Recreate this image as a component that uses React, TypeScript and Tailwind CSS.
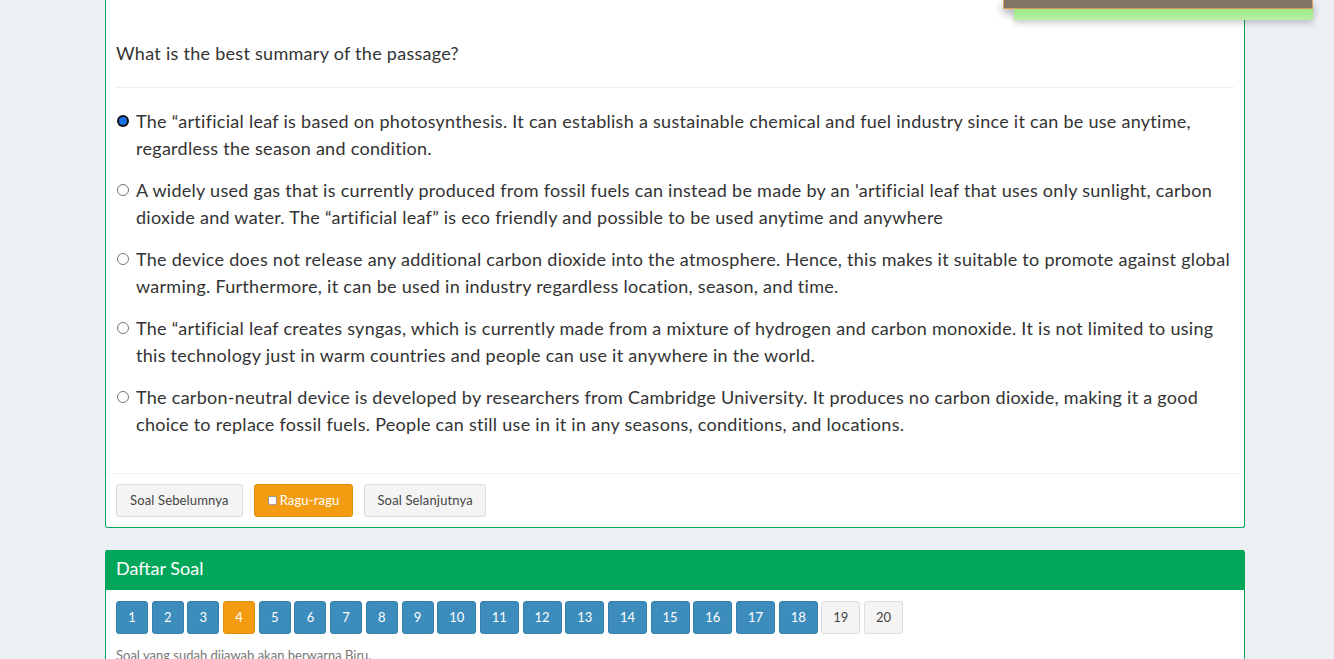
import React from "react";

const options = [
  "The \u201cartificial leaf is based on photosynthesis. It can establish a sustainable chemical and fuel industry since it can be use anytime, regardless the season and condition.",
  "A widely used gas that is currently produced from fossil fuels can instead be made by an 'artificial leaf that uses only sunlight, carbon dioxide and water. The \u201cartificial leaf\u201d is eco friendly and possible to be used anytime and anywhere",
  "The device does not release any additional carbon dioxide into the atmosphere. Hence, this makes it suitable to promote against global warming. Furthermore, it can be used in industry regardless location, season, and time.",
  "The \u201cartificial leaf creates syngas, which is currently made from a mixture of hydrogen and carbon monoxide. It is not limited to using this technology just in warm countries and people can use it anywhere in the world.",
  "The carbon-neutral device is developed by researchers from Cambridge University. It produces no carbon dioxide, making it a good choice to replace fossil fuels. People can still use in it in any seasons, conditions, and locations.",
];

function Radio({ checked }: { checked: boolean }) {
  if (checked) {
    return (
      <span className="mt-[7px] flex h-[12px] w-[12px] shrink-0 items-center justify-center rounded-full bg-[#111]">
        <span className="h-[8px] w-[8px] rounded-full bg-[#1a73e8]" />
      </span>
    );
  }
  return <span className="mt-[7px] h-[12px] w-[12px] shrink-0 rounded-full border border-[#767676] bg-white" />;
}

export default function App() {
  const nums = Array.from({ length: 20 }, (_, i) => i + 1);
  return (
    <div
      className="relative h-[659px] w-full overflow-hidden bg-[#ecf0f5] text-[#333]"
      style={{ fontFamily: "Lato, 'Liberation Sans', sans-serif" }}
    >
      {/* floating widget top right */}
      <div className="absolute left-[1003px] top-0 w-[310px]">
        <div className="h-[9px] border-b border-x border-[#d9a35a] bg-[#7f7466] shadow-[0_4px_8px_rgba(0,0,0,0.35)]" />
        <div className="ml-[11px] h-[11px] bg-gradient-to-b from-[#9fe883] to-[#b8f0a4] shadow-[0_3px_6px_rgba(0,0,0,0.2)]" />
      </div>

      <div className="ml-[105px] w-[1140px]">
        {/* question box */}
        <div className="rounded-b-[3px] border-x border-b border-[#00a65a] bg-white">
          <div className="px-[10px] pt-[40px] tracking-[0.28px]">
            <p className="text-[18px] leading-[27px]">What is the best summary of the passage?</p>
            <div className="mt-[20px] mb-[20px] border-t border-[#eee]" />
            <div className="flex flex-col gap-[15px]">
              {options.map((o, i) => (
                <div key={i} className="flex gap-[7px] pl-[1px]">
                  <Radio checked={i === 0} />
                  <span className="text-[18px] leading-[27px]">{o}</span>
                </div>
              ))}
            </div>
          </div>
          <div className="mt-[35px] flex gap-[11px] border-t border-[#f4f4f4] p-[10px] tracking-[0.15px]">
            <button className="h-[33px] rounded-[3px] border border-[#ddd] bg-[#f4f4f4] px-[13px] text-[13px] text-[#444]">
              Soal Sebelumnya
            </button>
            <button className="flex h-[33px] items-center gap-[3px] rounded-[3px] border border-[#e08e0b] bg-[#f39c12] px-[13px] text-[13px] text-white">
              <span className="h-[9px] w-[9px] rounded-[2px] border border-[#999] bg-white" />
              Ragu-ragu
            </button>
            <button className="h-[33px] rounded-[3px] border border-[#ddd] bg-[#f4f4f4] px-[12px] text-[13px] text-[#444]">
              Soal Selanjutnya
            </button>
          </div>
        </div>

        {/* daftar soal */}
        <div className="mt-[22px] rounded-t-[3px] border-x border-[#00a65a] bg-white">
          <div className="flex h-[40px] items-center bg-[#00a65a] px-[10px] pb-[3px] text-[18px] text-white">Daftar Soal</div>
          <div className="p-[10px] pt-[11px]">
            <div className="flex gap-[3.7px]">
              {nums.map((n) => {
                const w = n < 10 ? "w-[32px]" : "w-[39px]";
                let c = "border-[#367fa9] bg-[#3c8dbc] text-white";
                if (n === 4) c = "border-[#e08e0b] bg-[#f39c12] text-white";
                if (n > 18) c = "border-[#ddd] bg-[#f4f4f4] text-[#444]";
                return (
                  <div
                    key={n}
                    className={`flex h-[33px] ${w} items-center justify-center rounded-[3px] border text-[13px] ${c}`}
                  >
                    {n}
                  </div>
                );
              })}
            </div>
            <p className="mt-[12px] text-[13px] text-[#777]">Soal yang sudah dijawab akan berwarna Biru.</p>
          </div>
        </div>
      </div>
    </div>
  );
}
